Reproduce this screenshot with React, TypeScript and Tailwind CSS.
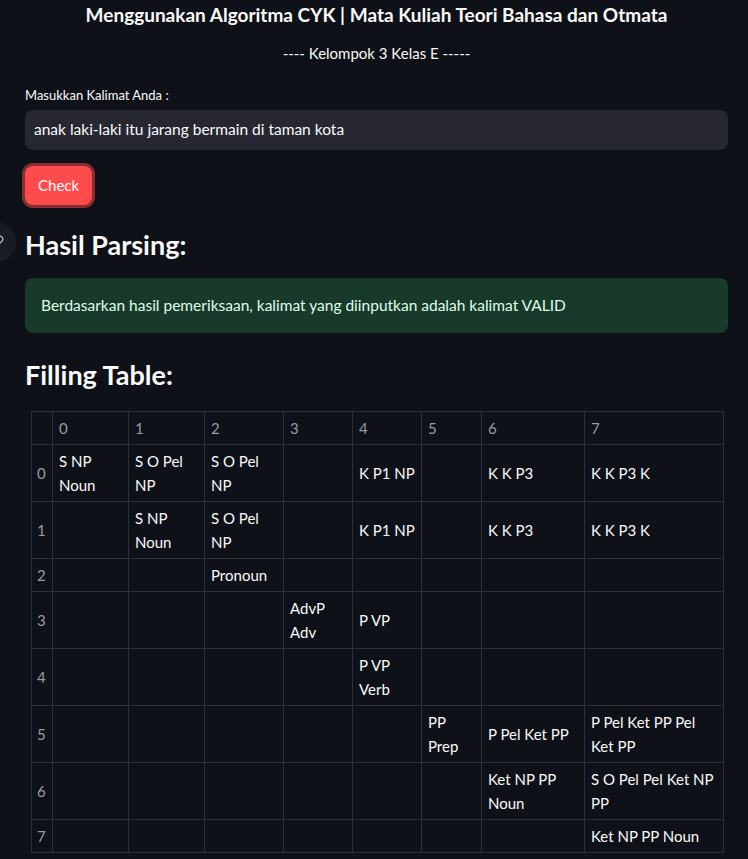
import { Link } from "lucide-react";

const font = { fontFamily: "Lato, 'Noto Sans', sans-serif" };

const colWidths = [21, 76, 76, 79, 69, 69, 60, 103, 139];

// each cell is a list of lines (kept as in the source layout)
const rows: string[][][] = [
  [["S NP", "Noun"], ["S O Pel", "NP"], ["S O Pel", "NP"], [], ["K P1 NP"], [], ["K K P3"], ["K K P3 K"]],
  [[], ["S NP", "Noun"], ["S O Pel", "NP"], [], ["K P1 NP"], [], ["K K P3"], ["K K P3 K"]],
  [[], [], ["Pronoun"], [], [], [], [], []],
  [[], [], [], ["AdvP", "Adv"], ["P VP"], [], [], []],
  [[], [], [], [], ["P VP", "Verb"], [], [], []],
  [[], [], [], [], [], ["PP", "Prep"], ["P Pel Ket PP"], ["P Pel Ket PP Pel", "Ket PP"]],
  [[], [], [], [], [], [], ["Ket NP PP", "Noun"], ["S O Pel Pel Ket NP", "PP"]],
  [[], [], [], [], [], [], [], ["Ket NP PP Noun"]],
];

function FillingTable() {
  return (
    <table className="table-fixed border-collapse text-[15px] leading-[24px] ml-[6px] w-[692px]">
      <colgroup>
        {colWidths.map((w, i) => (
          <col key={i} style={{ width: w }} />
        ))}
      </colgroup>
      <thead>
        <tr>
          <th className="border border-[#2f3139] py-[4px]" />
          {Array.from({ length: 8 }).map((_, i) => (
            <th
              key={i}
              className="border border-[#2f3139] px-[6px] py-[4px] text-left font-normal text-[#9a9ca3]"
            >
              {i}
            </th>
          ))}
        </tr>
      </thead>
      <tbody>
        {rows.map((row, r) => (
          <tr key={r}>
            <td className="border border-[#2f3139] px-[5px] py-[4px] text-[#9a9ca3]">{r}</td>
            {row.map((cell, c) => (
              <td
                key={c}
                className="border border-[#2f3139] px-[6px] py-[4px] align-middle text-[#fafafa] whitespace-nowrap"
              >
                {cell.map((line, k) => (
                  <div key={k}>{line}</div>
                ))}
              </td>
            ))}
          </tr>
        ))}
      </tbody>
    </table>
  );
}

export default function App() {
  return (
    <div className="relative min-h-[859px] w-full overflow-hidden bg-[#0e1117] text-[#fafafa]" style={font}>
      {/* anchor button peeking in from the left edge */}
      <div className="absolute left-[-24px] top-[222px] flex h-[40px] w-[40px] items-center justify-end rounded-full bg-[#1a1c23] pr-[12px]">
        <Link className="h-[14px] w-[14px] text-[#c9cbd1]" strokeWidth={2} />
      </div>

      <div className="flex flex-col pl-[25px] pr-[20px] pt-[1px] pb-[8px]">
        <div className="text-center text-[19px] font-bold leading-[28px]">
          Menggunakan Algoritma CYK | Mata Kuliah Teori Bahasa dan Otmata
        </div>
        <div className="mt-[12px] text-center text-[15px] leading-[24px]">---- Kelompok 3 Kelas E -----</div>

        <label className="mt-[20px] text-[13px] leading-[20px]">Masukkan Kalimat Anda :</label>
        <div className="mt-[5px] flex h-[40px] items-center rounded-lg bg-[#262730] px-[9px] text-[15.5px]">
          anak laki-laki itu jarang bermain di taman kota
        </div>

        <div className="mt-[16px]">
          <button className="h-[39px] rounded-lg bg-[#ff4b4b] px-[13px] text-[15px] text-white shadow-[0_0_0_3px_rgba(255,75,75,0.5)]">
            Check
          </button>
        </div>

        <h2 className="mt-[22px] text-[27px] font-bold leading-[36px]">Hasil Parsing:</h2>
        <div className="mt-[15px] flex h-[55px] items-center rounded-lg bg-[#183a2a] px-[16px] text-[15.5px] text-[#dffde9]">
          Berdasarkan hasil pemeriksaan, kalimat yang diinputkan adalah kalimat VALID
        </div>

        <h2 className="mt-[24px] text-[27px] font-bold leading-[36px]">Filling Table:</h2>
        <div className="mt-[18px]">
          <FillingTable />
        </div>
      </div>
    </div>
  );
}
